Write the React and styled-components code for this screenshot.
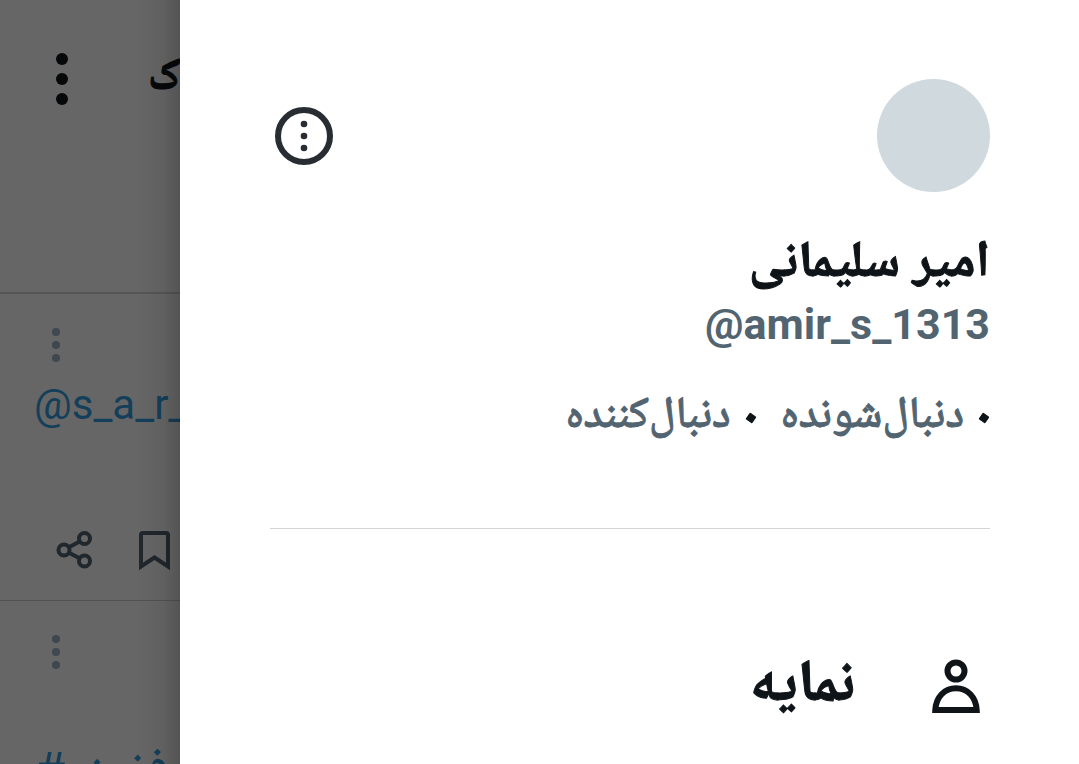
import React from 'react';
import styled, { createGlobalStyle } from 'styled-components';

const Global = createGlobalStyle`
  * { box-sizing: border-box; }
  body { margin: 0; background: #fff; color: #0f1419; font-family: Roboto, "Noto Naskh Arabic UI", "Noto Naskh Arabic", "Noto Sans Arabic", "DejaVu Sans", sans-serif; }
`;

const Screen = styled.div`
  display: flex;
  height: 100vh;
  overflow: hidden;
`;

const Feed = styled.div`
  position: relative;
  flex: 0 0 180px;
  display: flex;
  flex-direction: column;
  overflow: hidden;
  background: #666;

  &::after {
    content: '';
    position: absolute;
    inset: 0 0 0 auto;
    width: 44px;
    background: linear-gradient(to right, transparent, rgba(0, 0, 0, 0.06) 60%, rgba(0, 0, 0, 0.18));
    pointer-events: none;
  }
`;

const FeedBar = styled.header`
  display: flex;
  flex: 0 0 294px;
  align-items: flex-start;
  gap: 79px;
  padding: 52px 0 0 55px;
  border-bottom: 2px solid #545657;
`;

const FeedTitle = styled.h2`
  margin: 0;
  font-size: 44px;
  line-height: 56px;
  white-space: nowrap;
  color: #06080a;
  -webkit-text-stroke: 1px;
`;

const Post = styled.article`
  display: flex;
  flex-direction: column;
  flex: 0 0 307px;
  padding: 33px 0 0 34px;
  border-bottom: 1px solid #505354;
`;

const PlainButton = styled.button`
  display: flex;
  padding: 0;
  border: 0;
  background: none;
  color: ${(p) => p.$color || 'inherit'};
  cursor: pointer;
`;

const PostMenu = styled(PlainButton)`
  margin-left: 16px;
`;

const PostLink = styled.a`
  margin-top: 16px;
  font-size: 42px;
  line-height: 52px;
  white-space: nowrap;
  text-decoration: none;
  color: #143f5a;
`;

const HashLink = styled(PostLink)`
  margin-top: 76px;
  font-size: 51px;
`;

const Actions = styled.div`
  display: flex;
  gap: 46px;
  margin: 100px 0 0 22px;
`;

const Drawer = styled.aside`
  flex: 1;
  min-width: 0;
  padding: 79px 89px 0 90px;
  background: #fff;
`;

const Top = styled.div`
  display: flex;
  align-items: center;
  justify-content: space-between;
  padding-left: 5px;
`;

const Avatar = styled.div`
  width: 113px;
  height: 113px;
  border-radius: 50%;
  background: #cfd9de;
`;

const Name = styled.h1`
  margin: 40px 0 0;
  font-size: 51px;
  line-height: 68px;
  -webkit-text-stroke: 1px;
`;

const Handle = styled.div`
  margin-top: -2px;
  font-size: 43px;
  line-height: 52px;
  font-weight: 700;
  color: #536471;
  direction: ltr;
  text-align: right;
`;

const Stats = styled.div`
  display: flex;
  gap: 24px;
  margin-top: 36px;
  padding-bottom: 78px;
  border-bottom: 1px solid #d3d5d6;
`;

const Stat = styled.a`
  display: flex;
  align-items: center;
  gap: 16px;
  padding-right: 2px;
  font-size: 44px;
  line-height: 64px;
  font-weight: 500;
  text-decoration: none;
  white-space: nowrap;
  color: #536471;
  -webkit-text-stroke: 1px;
`;

const Dot = styled.span`
  width: 8px;
  height: 8px;
  border-radius: 1px;
  background: #0f1419;
  transform: rotate(35deg);
`;

const Item = styled.a`
  display: flex;
  align-items: center;
  gap: 75px;
  margin-top: 118px;
  padding-right: 8px;
  font-size: 59px;
  line-height: 76px;
  font-weight: 700;
  text-decoration: none;
  color: #0f1419;
  -webkit-text-stroke: 1px;
`;

const ItemLabel = styled.span`
  padding-top: 4px;
`;

function Dots({ width, height, r, step }) {
  return (
    <svg width={width} height={height} viewBox={`0 0 ${width} ${height}`} fill="currentColor" aria-hidden="true">
      {[-1, 0, 1].map((i) => (
        <circle key={i} cx={width / 2} cy={height / 2 + i * step} r={r} />
      ))}
    </svg>
  );
}

const ShareIcon = () => (
  <svg width="37" height="38" viewBox="0 0 37 38" fill="none" stroke="#20272d" strokeWidth="4" aria-hidden="true">
    <circle cx="28.5" cy="7.5" r="5.5" />
    <circle cx="8" cy="19" r="5.5" />
    <circle cx="28.5" cy="30" r="5.5" />
    <path d="M13 16.2 23.6 10.4M13 21.7 23.6 27.3" />
  </svg>
);

const BookmarkIcon = () => (
  <svg width="31" height="39" viewBox="0 0 31 39" fill="none" stroke="#20272d" strokeWidth="4" aria-hidden="true">
    <path d="M2 35.5V4Q2 2 4 2H27Q29 2 29 4V35.5L15.5 26.5Z" />
  </svg>
);

const MoreCircleIcon = () => (
  <svg width="58" height="58" viewBox="0 0 58 58" fill="#282d34" aria-hidden="true">
    <circle cx="29" cy="29" r="26" fill="none" stroke="#282d34" strokeWidth="6" />
    <circle cx="29" cy="17" r="3.3" />
    <circle cx="29" cy="29" r="3.3" />
    <circle cx="29" cy="41" r="3.3" />
  </svg>
);

const PersonIcon = () => (
  <svg width="52" height="56" viewBox="0 0 52 56" fill="none" stroke="currentColor" strokeWidth="6" aria-hidden="true">
    <circle cx="26" cy="12" r="8.5" />
    <path d="M5.3 51C6 38 14.5 29.3 26 29.3S46 38 46.7 51Z" />
  </svg>
);

export default function App() {
  return (
    <Screen>
      <Global />
      <Feed>
        <FeedBar>
          <PlainButton $color="#06080a" aria-label="گزینه‌ها">
            <Dots width={14} height={54} r={6} step={20} />
          </PlainButton>
          <FeedTitle dir="rtl">ک</FeedTitle>
        </FeedBar>
        <Post>
          <PostMenu $color="#3f484f" aria-label="بیشتر">
            <Dots width={12} height={36} r={4} step={13} />
          </PostMenu>
          <PostLink href="#user">@s_a_r_</PostLink>
          <Actions>
            <PlainButton aria-label="اشتراک‌گذاری"><ShareIcon /></PlainButton>
            <PlainButton aria-label="نشان کردن"><BookmarkIcon /></PlainButton>
          </Actions>
        </Post>
        <Post>
          <PostMenu $color="#3f484f" aria-label="بیشتر">
            <Dots width={12} height={36} r={4} step={13} />
          </PostMenu>
          <HashLink href="#tag">#فزمنو</HashLink>
        </Post>
      </Feed>
      <Drawer dir="rtl">
        <Top>
          <Avatar />
          <PlainButton aria-label="حساب‌ها"><MoreCircleIcon /></PlainButton>
        </Top>
        <Name>امیر سلیمانی</Name>
        <Handle>@amir_s_1313</Handle>
        <Stats>
          <Stat href="#following"><Dot />دنبال‌شونده</Stat>
          <Stat href="#followers"><Dot />دنبال‌کننده</Stat>
        </Stats>
        <nav>
          <Item href="#profile"><PersonIcon /><ItemLabel>نمایه</ItemLabel></Item>
        </nav>
      </Drawer>
    </Screen>
  );
}
